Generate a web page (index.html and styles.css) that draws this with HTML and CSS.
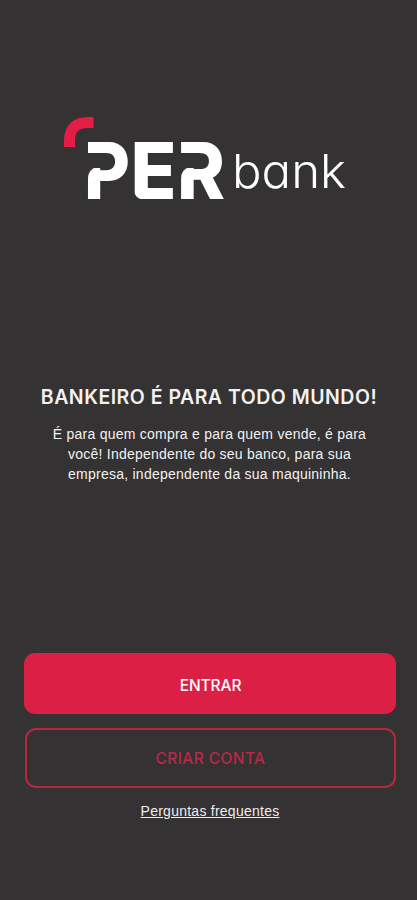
FILE: index.html
```html
<!DOCTYPE html>
<html lang="pt-BR">
<head>
<meta charset="utf-8">
<meta name="viewport" content="width=device-width, initial-scale=1">
<title>PER bank</title>
<link rel="stylesheet" href="styles.css">
</head>
<body>
<main class="screen">
  <header class="brand">
    <svg class="logo" viewBox="0 0 290 90" role="img" aria-label="PER bank">
      <path class="accent" d="M7.500 35V29Q7.500 10.500 26 10.500H31.500"/>
      <text class="per" x="22" y="87" textLength="46" lengthAdjust="spacingAndGlyphs">P</text>
      <text class="per" x="68.500" y="87" textLength="46" lengthAdjust="spacingAndGlyphs">E</text>
      <text class="per" x="115" y="87" textLength="48" lengthAdjust="spacingAndGlyphs">R</text>
      <rect class="cut" x="22" y="41" width="18" height="15"/>
      <rect class="cut" x="115" y="41" width="18" height="15"/>
      <path class="cut" d="M24 55H35Q26 57 26 67H24ZM117 55H128Q119 57 119 67H117ZM71 76Q72 87 83 88H71Z"/>
      <text class="bank" x="170" y="75.500" textLength="114" lengthAdjust="spacingAndGlyphs">bank</text>
    </svg>
  </header>
  <section class="intro">
    <h1 class="title">BANKEIRO É PARA TODO MUNDO!</h1>
    <p class="copy">É para quem compra e para quem vende, é para<br>você! Independente do seu banco, para sua<br>empresa, independente da sua maquininha.</p>
  </section>
  <nav class="actions">
    <button class="button primary"><span class="enter">ENTRAR</span></button>
    <button class="button outline"><span class="create">CRIAR CONTA</span></button>
    <a class="faq" href="#">Perguntas frequentes</a>
  </nav>
</main>
</body>
</html>
```
FILE: styles.css
```css
* { box-sizing: border-box; }
body { margin: 0; background: #343233; color: #f3f1f2; font-family: "Liberation Sans", sans-serif; }
.screen { height: 900px; overflow: hidden; display: flex; flex-direction: column; }
.brand { height: 382px; padding: 112px 0 0 62px; }
.logo { display: block; width: 290px; height: 90px; overflow: visible; }
.accent { fill: none; stroke: #e31d44; stroke-width: 11; }
.per { font: 800 79px Inter, sans-serif; fill: #fff; }
.cut { fill: #343233; }
.bank { font: 300 47px Inter, sans-serif; font-feature-settings: "cv11"; fill: #fff; }
.intro { height: 271px; text-align: center; }
.title { margin: 0; padding: 1px 0 0 1px; font: 600 19.5px/29px Inter, sans-serif; letter-spacing: .5px; white-space: nowrap; }
.copy { margin: 12px 0 0; padding-left: 2px; font-size: 14px; line-height: 20px; white-space: nowrap; letter-spacing: .24px; }
.actions { display: flex; flex-direction: column; align-items: center; padding: 0 21px 0 24px; }
.button { width: 100%; height: 61px; border: 0; border-radius: 11px; background: #dc1f44; color: #fff; font: 500 15.5px/24px Inter, sans-serif; padding: 4px 0 0 1px; }
.outline { width: 371px; margin: 14px 0 0 1px; height: 60px; border: 2px solid #b92543; background: transparent; color: #b92848; padding: 2px 0 0; }
.create { letter-spacing: .4px; }
.enter { letter-spacing: -.1px; }
.faq { margin-top: 13px; color: #efedee; font-size: 14px; line-height: 20px; letter-spacing: .25px; text-decoration-thickness: 1px; text-underline-offset: 1px; }
```
